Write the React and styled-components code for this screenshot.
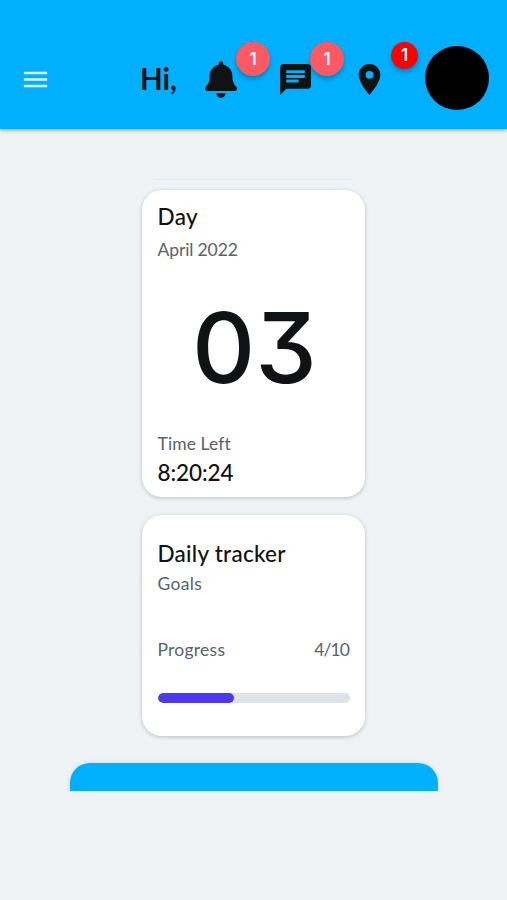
import styled, { createGlobalStyle } from 'styled-components';
import { FaBell } from 'react-icons/fa6';
import { MdChat, MdLocationOn, MdMenu } from 'react-icons/md';

const GOALS = { done: 4, total: 10 };

export default function App() {
  return (
    <Page>
      <GlobalStyle />
      <Header>
        <MenuButton type="button" aria-label="Menu"><MdMenu size={31} /></MenuButton>
        <Greeting>Hi,</Greeting>
        <Shortcut $gap={25} $width={32}>
          <FaBell size={37} />
          <Badge>1</Badge>
        </Shortcut>
        <Shortcut $gap={40} $width={37}>
          <MdChat size={37} />
          <Badge $left={33}>1</Badge>
        </Shortcut>
        <Shortcut $gap={37} $width={37}>
          <MdLocationOn size={37} />
          <Badge $small $left={40}>1</Badge>
        </Shortcut>
        <Avatar />
      </Header>

      <Content>
        <Divider />
        <DayCard>
          <Title $spacing={0.4}>Day</Title>
          <Caption $top={9} $spacing={-0.12}>April 2022</Caption>
          <DayNumber>03</DayNumber>
          <Caption $spacing={0.1}>Time Left</Caption>
          <Title as="time" $top={4} $spacing={-0.1}>8:20:24</Title>
        </DayCard>

        <TrackerCard>
          <Title $spacing={0.25}>Daily tracker</Title>
          <Caption $top={6} $spacing={0.3}>Goals</Caption>
          <ProgressRow>
            <Caption $spacing={0.25}>Progress</Caption>
            <Caption $spacing={-0.9}>{GOALS.done}/{GOALS.total}</Caption>
          </ProgressRow>
          <Track><Fill style={{ width: `${(GOALS.done / GOALS.total) * 100}%` }} /></Track>
        </TrackerCard>

        <BannerClip><Banner /></BannerClip>
      </Content>
    </Page>
  );
}

const GlobalStyle = createGlobalStyle`
  * { box-sizing: border-box; }
  body { margin: 0; background: #eff3f6; }
  h2, p { margin: 0; }
`;

const Page = styled.div`
  width: 507px; height: 900px; overflow: hidden;
  background: #eff3f6; color: #101213;
  font-family: Lato, "Liberation Sans", sans-serif;
`;

const Header = styled.header`
  display: flex; align-items: center;
  height: 128.5px; padding: 30.5px 18.5px 0 20px;
  background: #00b0ff;
  box-shadow: 0 1px 4px rgba(0, 0, 0, 0.4);
`;

const MenuButton = styled.button`
  display: flex; width: 31px; padding: 0; border: none; background: none; color: #d9f8ff;
`;

const Greeting = styled.span`
  width: 40px; margin: -2px 0 0 89px;
  font-size: 29.5px; font-weight: 700; line-height: 36px;
`;

const Shortcut = styled.div`
  position: relative; display: flex; justify-content: center; flex-shrink: 0;
  width: ${(p) => p.$width}px; margin-left: ${(p) => p.$gap}px;
`;

const Badge = styled.span`
  position: absolute; top: -19px; left: ${(p) => p.$left || 31}px;
  display: flex; align-items: center; justify-content: center;
  width: ${(p) => (p.$small ? 27 : 34)}px; height: ${(p) => (p.$small ? 27 : 34)}px;
  border-radius: 50%; background: ${(p) => (p.$small ? '#ff0000' : '#ff5963')};
  color: #fff; font-family: Inter, sans-serif; font-size: 17px; font-weight: 600; line-height: 1;
  box-shadow: 0 3px 5px rgba(0, 0, 0, 0.28);
`;

const Avatar = styled.div`
  width: 64px; height: 64px; margin: -3px 0 0 auto; border-radius: 50%; background: #000;
`;

const Content = styled.main`
  display: flex; flex-direction: column; align-items: center;
  padding-top: 50px;
`;

const Divider = styled.div`
  width: 198px; height: 1px; background: #e4e8eb;
`;

const Card = styled.section`
  display: flex; flex-direction: column;
  width: 223px; padding: 0 15.5px;
  border-radius: 20px; background: #fff;
  box-shadow: 0 1px 4px rgba(0, 0, 0, 0.22);
`;

const DayCard = styled(Card)`
  height: 307px; margin-top: 10.8px; padding-top: 12.7px;
`;

const TrackerCard = styled(Card)`
  height: 221px; margin-top: 18px; padding-top: 24.7px;
`;

const Title = styled.h2`
  margin-top: ${(p) => p.$top || 0}px;
  font-size: 22.5px; font-weight: 500; line-height: 27px; white-space: nowrap;
  letter-spacing: ${(p) => p.$spacing || 0}px;
`;

const Caption = styled.p`
  margin-top: ${(p) => p.$top || 0}px;
  color: #57636c; font-size: 17.5px; line-height: 22px; white-space: nowrap;
  letter-spacing: ${(p) => p.$spacing || 0}px;
`;

/* cv09 is Inter's flat-topped three */
const DayNumber = styled.div`
  display: flex; align-items: center; justify-content: center;
  height: 172px; padding: 3px 0 0 2px;
  font-family: Inter, sans-serif; font-size: 98px; font-weight: 500; line-height: 1;
  font-feature-settings: "cv09" 1;
`;

const ProgressRow = styled.div`
  display: flex; justify-content: space-between; margin-top: 44px;
  padding-right: 0.5px;
`;

const Track = styled.div`
  height: 9.5px; margin-top: 32.5px; border-radius: 5px; background: #e0e3e7; overflow: hidden;
`;

const Fill = styled.div`
  height: 100%; border-radius: 5px; background: #4b39ef;
`;

const BannerClip = styled.div`
  width: 380px; height: 33px; margin-top: 22px; padding: 5px 6px 0; overflow: hidden;
`;

const Banner = styled.div`
  height: 60px; border-radius: 20px; background: #00b0ff;
  box-shadow: 0 0 5px rgba(0, 0, 0, 0.12);
`;
